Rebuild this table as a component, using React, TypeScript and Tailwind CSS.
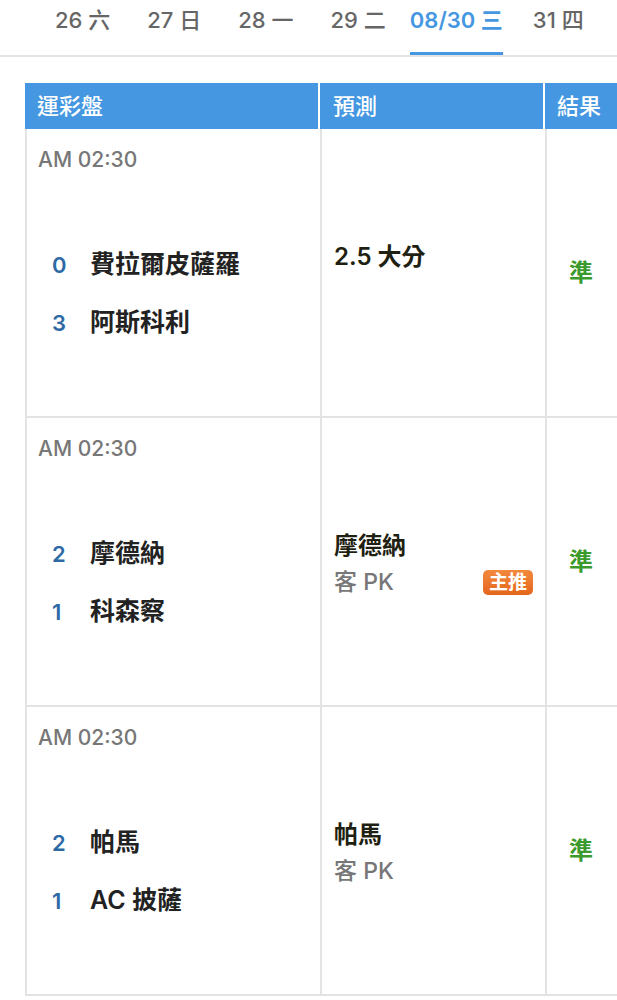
import React from 'react';

// Date tabs across the top
const tabs = [
  { label: '26 六', active: false },
  { label: '27 日', active: false },
  { label: '28 一', active: false },
  { label: '29 二', active: false },
  { label: '08/30 三', active: true },
  { label: '31 四', active: false },
];

interface Match {
  time: string;
  home: { score: number; name: string };
  away: { score: number; name: string };
  pick: string;
  sub?: string;
  featured?: boolean;
  result: string;
}

const matches: Match[] = [
  {
    time: 'AM 02:30',
    home: { score: 0, name: '費拉爾皮薩羅' },
    away: { score: 3, name: '阿斯科利' },
    pick: '2.5 大分',
    result: '準',
  },
  {
    time: 'AM 02:30',
    home: { score: 2, name: '摩德納' },
    away: { score: 1, name: '科森察' },
    pick: '摩德納',
    sub: '客 PK',
    featured: true,
    result: '準',
  },
  {
    time: 'AM 02:30',
    home: { score: 2, name: '帕馬' },
    away: { score: 1, name: 'AC 披薩' },
    pick: '帕馬',
    sub: '客 PK',
    result: '準',
  },
];

const font = "font-['Inter','Noto_Sans_CJK_TC',sans-serif]";

const TeamLine: React.FC<{ score: number; name: string }> = ({ score, name }) => (
  <div className="flex items-center h-[34px]">
    <span className="w-[38px] text-[22px] font-semibold text-[#2d6aa5]">{score}</span>
    <span className="text-[25px] font-semibold text-[#222]">{name}</span>
  </div>
);

const App: React.FC = () => {
  return (
    <div className={`${font} bg-white w-[617px] h-[1000px] overflow-hidden`}>
      {/* tab bar */}
      <div className="flex items-end h-[57px] border-b-2 border-[#e3e3e3] pl-[55px] gap-[37px]">
        {tabs.map(tab => (
          <div
            key={tab.label}
            className={`h-full flex items-center text-[22px] pb-[3px] border-b-[3px] ${
              tab.active
                ? 'border-[#4497e0] text-[#4497e0] font-semibold -ml-[13px] -mr-[7px]'
                : 'border-transparent text-[#666] font-medium'
            }`}
          >
            <span className="-mt-[8px]">{tab.label}</span>
          </div>
        ))}
      </div>

      {/* table */}
      <div className="mt-[26px] ml-[25px] w-[610px]">
        <div className="grid grid-cols-[295px_225px_90px] h-[46px] bg-[#4497e0] text-white text-[22px] font-medium">
          <div className="flex items-center pl-[12px] border-r-2 border-white">運彩盤</div>
          <div className="flex items-center pl-[13px] border-r-2 border-white">預測</div>
          <div className="flex items-center pl-[12px]">結果</div>
        </div>

        {matches.map((m, i) => (
          <div key={i} className="grid grid-cols-[295px_225px_90px] h-[289px] border-l-2 border-b-2 border-[#e3e3e3]">
            <div className="border-r-2 border-[#e3e3e3] pl-[25px] pt-[17px]">
              <div className="text-[21px] font-medium text-[#777] h-[28px] leading-[28px] -ml-[14px]">{m.time}</div>
              <div className="mt-[74px] flex flex-col gap-[24px]">
                <TeamLine score={m.home.score} name={m.home.name} />
                <TeamLine score={m.away.score} name={m.away.name} />
              </div>
            </div>

            <div className="border-r-2 border-[#e3e3e3] flex items-center pl-[12px] pr-[12px]">
              <div className="w-full mt-[4px]">
                <div className="text-[24px] font-semibold text-[#1f1f12] leading-[37px]">{m.pick}</div>
                <div className="flex items-center justify-between h-[37px]">
                  <span className="text-[23px] font-medium text-[#777]">{m.sub}</span>
                  {m.featured && (
                    <span className="rounded-[5px] bg-gradient-to-b from-[#f2893c] to-[#e4661c] text-white text-[19px] font-semibold leading-[25px] px-[6px]">
                      主推
                    </span>
                  )}
                </div>
              </div>
            </div>

            <div className="flex items-center pl-[22px]">
              <span className="text-[24px] font-semibold text-[#3a9a2c]">{m.result}</span>
            </div>
          </div>
        ))}
      </div>
    </div>
  );
};

export default App;
